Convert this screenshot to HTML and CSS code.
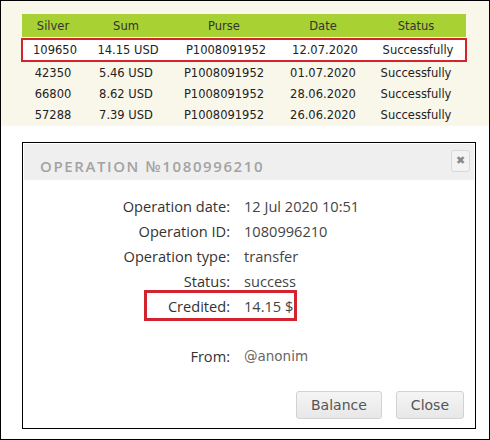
FILE: index.html
```html
<!DOCTYPE html>
<html lang="en">
<head>
  <meta charset="UTF-8" />
  <title>Operation details</title>
  <link rel="stylesheet" href="styles.css">
</head>
<body>

  <div class="frame">

    <div class="history">
      <div class="grid head">
        <span>Silver</span><span>Sum</span><span>Purse</span><span>Date</span><span>Status</span>
      </div>
      <div class="grid row marked">
        <span>109650</span><span>14.15 USD</span><span>P1008091952</span><span>12.07.2020</span><span>Successfully</span>
      </div>
      <div class="grid row">
        <span>42350</span><span>5.46 USD</span><span>P1008091952</span><span>01.07.2020</span><span>Successfully</span>
      </div>
      <div class="grid row">
        <span>66800</span><span>8.62 USD</span><span>P1008091952</span><span>28.06.2020</span><span>Successfully</span>
      </div>
      <div class="grid row">
        <span>57288</span><span>7.39 USD</span><span>P1008091952</span><span>26.06.2020</span><span>Successfully</span>
      </div>
    </div>

    <div class="dialog">
      <div class="dialog-head">
        <h3>Operation №1080996210</h3>
        <button class="x" type="button">&#10006;</button>
      </div>

      <div class="details">
        <div class="line"><span class="key">Operation date:</span><span class="val">12 Jul 2020 10:51</span></div>
        <div class="line"><span class="key">Operation ID:</span><span class="val">1080996210</span></div>
        <div class="line"><span class="key">Operation type:</span><span class="val">transfer</span></div>
        <div class="line"><span class="key">Status:</span><span class="val">success</span></div>
        <div class="line credited"><span class="key">Credited:</span><span class="val">14.15 $</span><i class="mark"></i></div>
        <div class="line"><span class="key"></span><span class="val"></span></div>
        <div class="line"><span class="key">From:</span><span class="val nick">@anonim</span></div>
      </div>

      <div class="actions">
        <button class="btn" type="button">Balance</button>
        <button class="btn" type="button">Close</button>
      </div>
    </div>

  </div>

</body>
</html>
```

FILE: styles.css
```css
* {
  box-sizing: border-box;
}
body {
  margin: 0;
  background: #fff;
}
.frame {
  width: 490px;
  height: 440px;
  border: 1px solid #000;
  overflow: hidden;
  background: #fff;
}

/* payout history */
.history {
  background: #f9f6ea;
  padding: 13px 0 1px 21px;
  font-family: 'DejaVu Sans', Verdana, sans-serif;
  font-size: 11.5px;
  color: #222;
}
.grid {
  display: grid;
  grid-template-columns: 62px 84px 112px 86px 100px;
  width: 444px;
  text-align: center;
  align-items: center;
}
.head {
  background: #a8d133;
  height: 23px;
  color: #333;
  margin-bottom: 1px;
}
.row {
  height: 21px;
}
.marked {
  height: 24px;
  width: 446px;
  margin-left: -1px;
  padding: 0 1px;
  background: #fff;
  border: 2px solid #d2232f;
}

/* operation dialog */
.dialog {
  margin: 16px 0 0 21px;
  width: 454px;
  border: 1px solid #000;
  padding: 1px 1px 9px;
  font-family: 'Open Sans', sans-serif;
  font-size: 14.6px;
}
.dialog-head {
  display: flex;
  justify-content: space-between;
  align-items: flex-start;
  background: #efefef;
  height: 36px;
  padding: 6px 4px 0 16px;
}
.dialog-head h3 {
  margin: 6px 0 0;
  font-size: 15px;
  font-weight: 600;
  letter-spacing: 1.6px;
  text-transform: uppercase;
  color: #a3a3a3;
}
.x {
  width: 19px;
  height: 22px;
  padding: 0;
  border: 1px solid #d8d8d8;
  border-radius: 3px;
  background: #f3f3f3;
  color: #888;
  font: 11px/20px 'DejaVu Sans', sans-serif;
}
.details {
  padding-top: 13px;
}
.line {
  position: relative;
  display: grid;
  grid-template-columns: 206px 1fr;
  column-gap: 14px;
  height: 25px;
  align-items: center;
}
.key {
  text-align: right;
  color: #333;
}
.val {
  color: #444;
}
.nick {
  font-family: 'DejaVu Sans', Verdana, sans-serif;
  font-size: 13.5px;
  color: #666;
}
.mark {
  position: absolute;
  left: 120px;
  top: -3px;
  width: 153px;
  height: 31px;
  border: 3px solid #d2232f;
}
.actions {
  display: flex;
  justify-content: flex-end;
  gap: 14px;
  margin-top: 23px;
  padding-right: 10px;
}
.btn {
  height: 28px;
  padding: 0 14px;
  border: 1px solid #d2d2d2;
  border-radius: 3px;
  background: linear-gradient(#f5f5f5, #e8e8e8);
  color: #555;
  font: 14px 'DejaVu Sans', Verdana, sans-serif;
}
```
